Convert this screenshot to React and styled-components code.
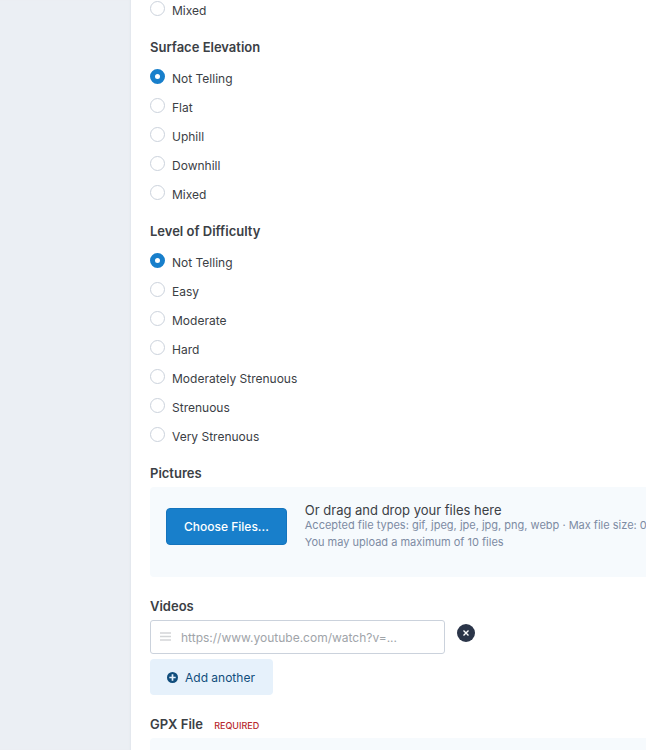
import { useState } from 'react';
import styled, { createGlobalStyle } from 'styled-components';

const elevations = ['Not Telling', 'Flat', 'Uphill', 'Downhill', 'Mixed'];

const difficulties = [
  'Not Telling',
  'Easy',
  'Moderate',
  'Hard',
  'Moderately Strenuous',
  'Strenuous',
  'Very Strenuous',
];

function RadioGroup({ title, name, options, value, onChange }) {
  return (
    <Group role="radiogroup" aria-label={title || name}>
      {title && <Heading>{title}</Heading>}
      <Options $spaced={Boolean(title)}>
        {options.map((option) => (
          <Option key={option}>
            <Radio
              type="radio"
              name={name}
              value={option}
              checked={value === option}
              onChange={() => onChange(option)}
            />
            <span>{option}</span>
          </Option>
        ))}
      </Options>
    </Group>
  );
}

export default function App() {
  const [surface, setSurface] = useState('');
  const [elevation, setElevation] = useState('Not Telling');
  const [difficulty, setDifficulty] = useState('Not Telling');
  const [videos, setVideos] = useState(['']);

  const changeVideo = (index, text) => {
    setVideos(videos.map((video, i) => (i === index ? text : video)));
  };

  const removeVideo = (index) => {
    setVideos(videos.filter((_, i) => i !== index));
  };

  return (
    <Page>
      <GlobalStyle />
      <Gutter />
      <Form onSubmit={(e) => e.preventDefault()}>
        <RadioGroup
          name="surface"
          options={['Mixed']}
          value={surface}
          onChange={setSurface}
        />
        <RadioGroup
          title="Surface Elevation"
          name="elevation"
          options={elevations}
          value={elevation}
          onChange={setElevation}
        />
        <RadioGroup
          title="Level of Difficulty"
          name="difficulty"
          options={difficulties}
          value={difficulty}
          onChange={setDifficulty}
        />

        <Section>
          <Heading>Pictures</Heading>
          <DropZone>
            <ChooseButton type="button">Choose Files...</ChooseButton>
            <DropText>
              <DropTitle>Or drag and drop your files here</DropTitle>
              <DropHint>
                Accepted file types: gif, jpeg, jpe, jpg, png, webp · Max file size: 0
              </DropHint>
              <DropHint>You may upload a maximum of 10 files</DropHint>
            </DropText>
          </DropZone>
        </Section>

        <Section>
          <Heading>Videos</Heading>
          {videos.map((video, index) => (
            <VideoRow key={index}>
              <VideoField>
                <svg width="11" height="10" viewBox="0 0 11 10" aria-hidden="true">
                  <path d="M0 1h11M0 4.5h11M0 8h11" stroke="#d3d5d7" strokeWidth="1.6" />
                </svg>
                <VideoInput
                  type="url"
                  aria-label="Video URL"
                  placeholder="https://www.youtube.com/watch?v=..."
                  value={video}
                  onChange={(e) => changeVideo(index, e.target.value)}
                />
              </VideoField>
              <RemoveButton
                type="button"
                aria-label="Remove video"
                onClick={() => removeVideo(index)}
              >
                <svg width="18" height="18" viewBox="0 0 18 18" aria-hidden="true">
                  <path d="M6.5 6.5l5 5M11.5 6.5l-5 5" stroke="#fff" strokeWidth="1.4" />
                </svg>
              </RemoveButton>
            </VideoRow>
          ))}
          <AddButton type="button" onClick={() => setVideos([...videos, ''])}>
            <svg width="11" height="11" viewBox="0 0 11 11" aria-hidden="true">
              <circle cx="5.5" cy="5.5" r="5.5" fill="#104d7c" />
              <path d="M5.5 2.3v6.4M2.3 5.5h6.4" stroke="#e6f1fb" strokeWidth="1.7" />
            </svg>
            Add another
          </AddButton>
        </Section>

        <Section>
          <Heading>
            GPX File <Required>Required</Required>
          </Heading>
          <DropZone />
        </Section>
      </Form>
    </Page>
  );
}

const GlobalStyle = createGlobalStyle`
  * {
    box-sizing: border-box;
  }

  body {
    margin: 0;
    background: #ffffff;
    color: #3b4045;
    font-family: Inter, 'Liberation Sans', sans-serif;
    font-size: 12px;
    line-height: 20px;
  }

  button,
  input {
    font: inherit;
  }
`;

const Page = styled.div`
  display: flex;
  height: 100vh;
  overflow: hidden;
`;

const Gutter = styled.aside`
  flex: 0 0 131px;
  background: #ebeff4;
  box-shadow: inset -2px 0 2px -1px #e1e6ec;
`;

const Form = styled.form`
  flex: 1;
  min-width: 0;
  margin-top: -4px;
  padding-left: 19px;
`;

const Group = styled.div`
  margin-bottom: 12px;
`;

const Heading = styled.h3`
  margin: 0;
  font-size: 13px;
  font-weight: 600;
  line-height: 20px;
`;

const Options = styled.div`
  padding-top: ${({ $spaced }) => ($spaced ? '7px' : '0')};
`;

const Option = styled.label`
  display: flex;
  align-items: flex-start;
  gap: 7px;
  width: fit-content;
  height: 29px;
  padding-top: 5px;
  cursor: pointer;
`;

const Radio = styled.input`
  appearance: none;
  width: 15px;
  height: 15px;
  margin: 0;
  border: 1px solid #cbd2dc;
  border-radius: 50%;
  background: #ffffff;

  &:checked {
    border: 5px solid #187fcb;
  }
`;

const Section = styled.section`
  margin-bottom: 19px;
`;

const DropZone = styled.div`
  display: flex;
  align-items: flex-start;
  gap: 18px;
  min-height: 90px;
  margin-top: 4px;
  padding: 21px 0 21px 16px;
  border-radius: 4px 0 0 4px;
  background: #f6fafd;
  overflow: hidden;
`;

const ChooseButton = styled.button`
  flex: none;
  height: 37px;
  padding: 0 17px;
  border: 1px solid #1474bd;
  border-radius: 4px;
  background: #187fcb;
  color: #ffffff;
  font-weight: 500;
  cursor: pointer;
`;

const DropText = styled.div`
  margin-top: -5px;
  white-space: nowrap;
`;

const DropTitle = styled.p`
  margin: 0;
  font-size: 13px;
  line-height: 14px;
`;

const DropHint = styled.p`
  margin: 0;
  color: #7d8ba3;
  font-size: 11px;
  line-height: 17px;
`;

const VideoRow = styled.div`
  display: flex;
  align-items: flex-start;
  gap: 12px;
  margin: 4px 0 5px;
`;

const VideoField = styled.div`
  display: flex;
  align-items: center;
  gap: 10px;
  flex: 0 1 295px;
  height: 34px;
  padding: 0 9px;
  border: 1px solid #cbd2dc;
  border-radius: 3px;
  background: #ffffff;

  svg {
    flex: none;
  }
`;

const VideoInput = styled.input`
  flex: 1;
  min-width: 0;
  padding: 2px 0 0;
  border: 0;
  outline: 0;
  background: transparent;
  color: #3b4045;

  &::placeholder {
    color: #a0a4a9;
    opacity: 1;
  }
`;

const RemoveButton = styled.button`
  display: flex;
  width: 18px;
  height: 18px;
  margin-top: 4px;
  padding: 0;
  border: 0;
  border-radius: 50%;
  background: #2b3549;
  cursor: pointer;
`;

const AddButton = styled.button`
  display: flex;
  align-items: center;
  gap: 7px;
  height: 36px;
  padding: 1px 18px 0 17px;
  border: 0;
  border-radius: 4px;
  background: #e6f1fb;
  color: #104d7c;
  cursor: pointer;
`;

const Required = styled.span`
  margin-left: 8px;
  color: #b8292f;
  font-size: 9px;
  font-weight: 500;
  line-height: 9px;
  text-transform: uppercase;
`;
